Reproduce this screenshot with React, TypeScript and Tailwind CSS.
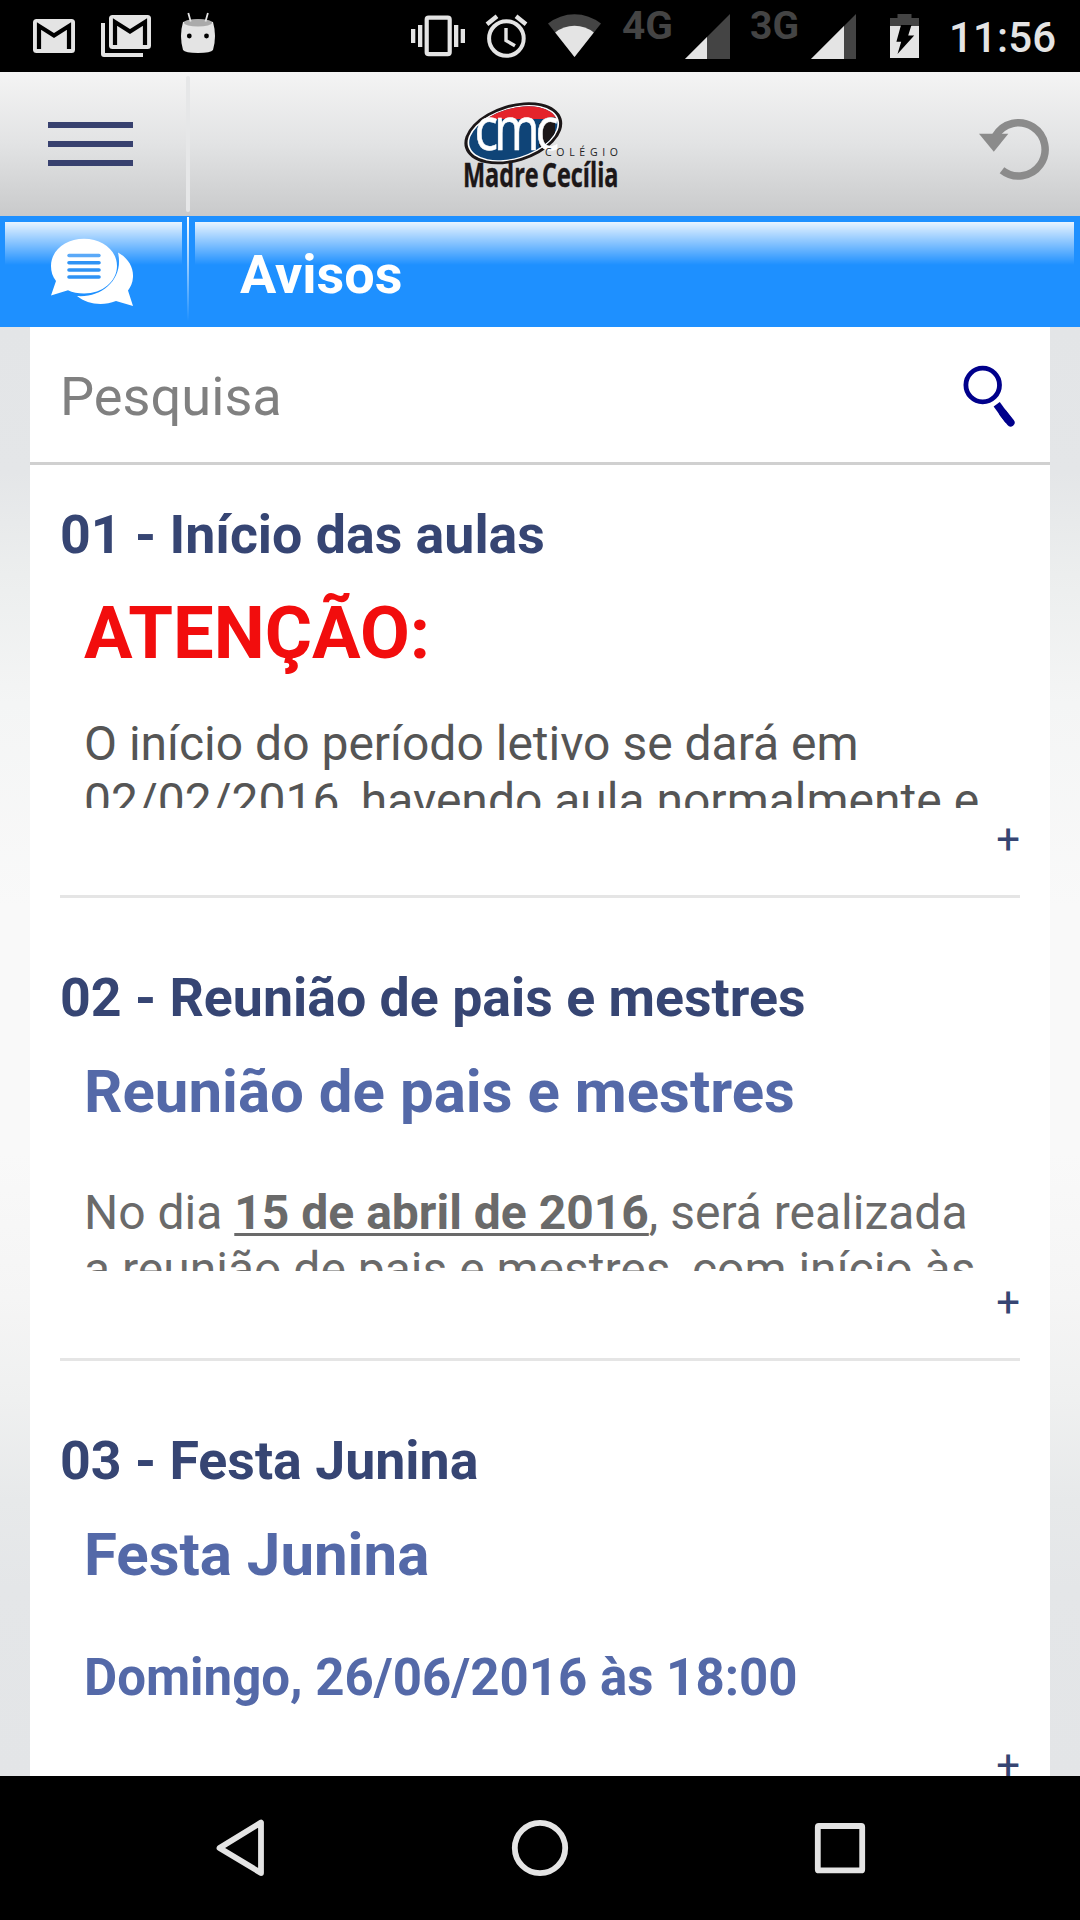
import type { ReactNode } from "react";

type Notice = {
  title: string;
  content: ReactNode;
};

const notices: Notice[] = [
  {
    title: "01 - Início das aulas",
    content: (
      <>
        <h1 className="mt-[25px] mb-[39px] text-[72.3px] leading-[84px] font-bold text-[#f20d0d]">ATENÇÃO:</h1>
        <p className="text-[48px] leading-[57px] text-[#555]">
          O início do período letivo se dará em
          <br />
          02/02/2016, havendo aula normalmente e
        </p>
      </>
    ),
  },
  {
    title: "02 - Reunião de pais e mestres",
    content: (
      <>
        <h2 className="mt-[27px] mb-[57px] text-[60px] leading-[70px] font-bold text-[#5469a8]">
          Reunião de pais e mestres
        </h2>
        <p className="text-[48px] leading-[57px] text-[#6a6a6a]">
          No dia <b className="underline decoration-[3px] underline-offset-[4px]">15 de abril de 2016</b>, será realizada
          <br />a reunião de pais e mestres, com início às
        </p>
      </>
    ),
  },
  {
    title: "03 - Festa Junina",
    content: (
      <>
        <h2 className="mt-[27px] mb-[57px] text-[60px] leading-[70px] font-bold text-[#5469a8]">Festa Junina</h2>
        <h3 className="text-[51px] leading-[62px] font-bold text-[#5469a8]">Domingo, 26/06/2016 às 18:00</h3>
      </>
    ),
  },
];

function StatusBar() {
  return (
    <div className="h-[72px] shrink-0 bg-black">
      <svg width="1080" height="72" viewBox="0 0 1080 72" fill="#e4e4e4">
        {/* mail */}
        <rect x="33" y="19" width="42" height="34" rx="3.5" />
        <path d="M39 49V26L54 35.5L69 26V49" fill="none" stroke="#000" strokeWidth="4.2" />
        <rect x="109" y="15" width="42" height="34" rx="3.5" />
        <path d="M115 45V22L130 31.5L145 22V45" fill="none" stroke="#000" strokeWidth="4.2" />
        <path d="M101 23h4v30h38v4h-39a3 3 0 0 1-3-3z" />
        {/* android head */}
        <path d="M183 22Q198 17 213 22Q217 36 213 50Q211 53 198 53Q185 53 183 50Q179 36 183 22z" />
        <ellipse cx="198" cy="22.8" rx="14" ry="3.8" fill="#aaa" />
        <path d="M188.3 13L190.7 21.5M207.9 13L205.5 21.5" stroke="#e4e4e4" strokeWidth="1.8" />
        <circle cx="189.3" cy="36" r="2.4" fill="#000" />
        <circle cx="206.5" cy="36" r="2.4" fill="#000" />
        {/* vibrate */}
        <rect x="426.7" y="17.7" width="23" height="36.5" rx="2" fill="none" stroke="#e4e4e4" strokeWidth="4.2" />
        <path d="M411 29h4.3v14H411zM418 25h4.3v22H418zM454 25h4.3v22H454zM460.7 29h4.3v14h-4.3z" />
        {/* alarm */}
        <g fill="none" stroke="#e4e4e4" strokeWidth="4">
          <circle cx="506.4" cy="38.5" r="17.3" />
          <path d="M506 28v12.5l9 5.3" strokeWidth="3.4" />
          <path d="M487 24.3L497 16.3M526 24.3L516 16.3" strokeWidth="4.4" />
        </g>
        {/* wifi */}
        <path d="M574.5 57L548 23.5A43 43 0 0 1 601 23.5z" fill="#444" />
        <path d="M574.5 57L555.2 32.5A31 31 0 0 1 593.8 32.5z" />
        {/* signal */}
        <g fill="#444">
          <path d="M685 59L730 14V59z" />
          <path d="M811 59L856 14V59z" />
          <text x="622" y="39" fontSize="38" fontWeight="700" textLength="51" lengthAdjust="spacingAndGlyphs">4G</text>
          <text x="750" y="39" fontSize="38" fontWeight="700" textLength="49" lengthAdjust="spacingAndGlyphs">3G</text>
        </g>
        <path d="M685 59L707 37V59z" />
        <path d="M811 59L844 26V59z" />
        {/* battery */}
        <path d="M890 27V18h7.5v-4h14v4h7.5v9z" fill="#444" />
        <path d="M890 26h29v32h-29z" />
        <path d="M901 25h10.5l-3.3 10.5h6L897.5 54l3.7-12.3h-4.8z" fill="#000" />
        <text x="949" y="52" fontSize="42" fontWeight="500" textLength="107">11:56</text>
      </svg>
    </div>
  );
}

function Logo() {
  return (
    <svg width="160" height="98" viewBox="460 98 160 98">
      <defs>
        <clipPath id="oval">
          <ellipse cx="513.3" cy="133.3" rx="45.5" ry="24.5" transform="rotate(-17 513.3 133.3)" />
        </clipPath>
      </defs>
      <g transform="rotate(-17 513.3 133.3)">
        <ellipse cx="513.3" cy="133.3" rx="50.4" ry="28.6" fill="#1c1718" />
        <ellipse cx="513.3" cy="133.3" rx="47.2" ry="25.8" fill="#fff" />
      </g>
      <g clipPath="url(#oval)">
        <rect x="460" y="98" width="110" height="70" fill="#0f4477" />
        <path d="M460 98h110v26q-10-6-20-5h-52q-14 0-24 8h-14z" fill="#e4242b" />
        <path d="M539 124q6-8 16-7v30q-14 8-16-2z" fill="#1c1718" />
      </g>
      <g transform="translate(474.5 150) scale(0.82 1)">
        <text fontFamily="Open Sans" fontSize="60" letterSpacing="-5" fill="#fff" stroke="#fff" strokeWidth="0.6">
          cmc
        </text>
      </g>
      <text x="545" y="156" fontFamily="Open Sans" fontSize="10.5" fill="#222" textLength="73">COLÉGIO</text>
      <text
        x="463"
        y="186.5"
        fontFamily="Open Sans"
        fontSize="34"
        fontWeight="700"
        fill="#1c1718"
        stroke="#1c1718"
        strokeWidth="0.4"
        wordSpacing="-4"
        textLength="155.5"
        lengthAdjust="spacingAndGlyphs"
      >
        Madre Cecília
      </text>
    </svg>
  );
}

function Header() {
  return (
    <header className="flex h-36 shrink-0 items-center bg-linear-to-b from-[#f4f4f4] via-[#e2e3e4] to-[#c9cacb]">
      <button className="flex h-full w-[186px] items-center pl-12">
        <span className="flex flex-col gap-[13.5px]">
          <span className="h-[5.5px] w-[85px] bg-[#38416f]" />
          <span className="h-[5.5px] w-[85px] bg-[#38416f]" />
          <span className="h-[5.5px] w-[85px] bg-[#38416f]" />
        </span>
      </button>
      <span className="h-[136px] w-1 rounded-full bg-[#e6e7e8]" />
      <div className="flex-1 pt-1.5 pl-[270px]">
        <Logo />
      </div>
      <svg className="mr-[30px]" width="72" height="72" viewBox="978 108 72 72">
        <path d="M995.5 136A26.6 26.6 0 1 1 1002 170.2" fill="none" stroke="#8b8b8b" strokeWidth="7.5" />
        <path d="M979 133.7h29.3l-14.5 18z" fill="#8b8b8b" />
      </svg>
    </header>
  );
}

function TitleBar() {
  return (
    <div className="flex h-[111px] shrink-0 bg-[#1e90ff] pt-1.5 pr-1.5 pl-[5px]">
      <div className="h-[43px] w-[177px] bg-linear-to-b from-white/90 to-white/0 pt-[17px] pl-[46px]">
        <svg width="82" height="68" viewBox="51 239 82 68" className="max-w-none overflow-visible">
          <path
            d="M118 252.5C128 258 133.5 267 133 277C132.7 283 130.5 287 128 290.5L133 306L116 301C102 306.5 87 304 77 296C103 298 124 278 118 252.5z"
            fill="#fff"
          />
          <path
            d="M84 238.7C102.5 238.7 117 250.5 117 266C117 281.5 102.5 293.5 84 293.5C78 293.5 72.5 292.5 68 290.3L51 295.5L56 281C52.5 276.5 51 271.5 51 266C51 250.5 65.5 238.7 84 238.7z"
            fill="#fff"
          />
          <path d="M69 255.5h30" stroke="#5aa9f8" strokeWidth="3.4" strokeLinecap="round" />
          <path d="M69 262.8h30M69 270h30M69 277h30" stroke="#2f93f5" strokeWidth="3.6" strokeLinecap="round" />
        </svg>
      </div>
      <span className="-mt-[5px] ml-[5px] h-[104px] w-[2px] bg-linear-to-b from-white to-white/0" />
      <div className="ml-1.5 h-[43px] flex-1 bg-linear-to-b from-white/90 to-white/0">
        <h1 className="pt-[21px] pl-[45px] text-[54px] leading-[64px] font-bold text-white">Avisos</h1>
      </div>
    </div>
  );
}

function SearchBox() {
  return (
    <div className="flex h-[138px] items-center justify-between border-b-[3px] border-[#d0d0d0] px-[30px]">
      <span className="pt-1 text-[54.2px] leading-[64px] text-[#808080]">Pesquisa</span>
      <svg width="60" height="72" viewBox="960 359 60 72">
        <circle cx="982.7" cy="385" r="16.8" fill="none" stroke="#00008b" strokeWidth="4.8" />
        <path d="M996.7 404.3L1008.5 420.5" stroke="#00008b" strokeWidth="7.6" />
        <path d="M1003 413L1010.6 422.6" stroke="#00008b" strokeWidth="8" strokeLinecap="round" />
      </svg>
    </div>
  );
}

function NoticeItem({ title, content }: Notice) {
  return (
    <article className="flex h-[463px] shrink-0 flex-col border-b-[3px] border-[#e5e5e5] pt-[68px]">
      <h2 className="text-[53.7px] leading-[64px] font-bold whitespace-nowrap text-[#364573]">{title}</h2>
      <div className="flex h-[241px] flex-col overflow-hidden pl-6 whitespace-nowrap">{content}</div>
      <button className="mt-2 self-end text-[42px] leading-[48px] text-[#364573]">+</button>
    </article>
  );
}

function NavBar() {
  return (
    <nav className="h-36 shrink-0 bg-black">
      <svg width="1080" height="144" viewBox="0 1776 1080 144" fill="none" stroke="#e4e4e4" strokeWidth="5.8" strokeLinejoin="round">
        <path d="M219.5 1848L261 1822.5V1873z" />
        <circle cx="540" cy="1848" r="25.2" />
        <rect x="817.8" y="1826" width="44.4" height="44.4" rx="1" />
      </svg>
    </nav>
  );
}

export default function App() {
  return (
    <div className="flex h-[1920px] w-[1080px] flex-col overflow-hidden font-['Roboto',sans-serif]">
      <StatusBar />
      <Header />
      <TitleBar />
      <main className="min-h-0 flex-1 overflow-hidden bg-[linear-gradient(180deg,#e3e5e7_0%,#e4e6e8_10%,#eceeee_17%,#f4f5f5_26%,#f9f9f9_40%,#f9f9f9_57%,#f5f5f5_67%,#eff0f0_74%,#e7e9ea_81%,#e4e6e8_87%,#e3e5e7_100%)] px-[30px]">
        <div className="h-full overflow-hidden bg-white">
          <SearchBox />
          <div className="-mt-[30px] flex flex-col px-[30px]">
            {notices.map((n) => (
              <NoticeItem key={n.title} {...n} />
            ))}
          </div>
        </div>
      </main>
      <NavBar />
    </div>
  );
}
